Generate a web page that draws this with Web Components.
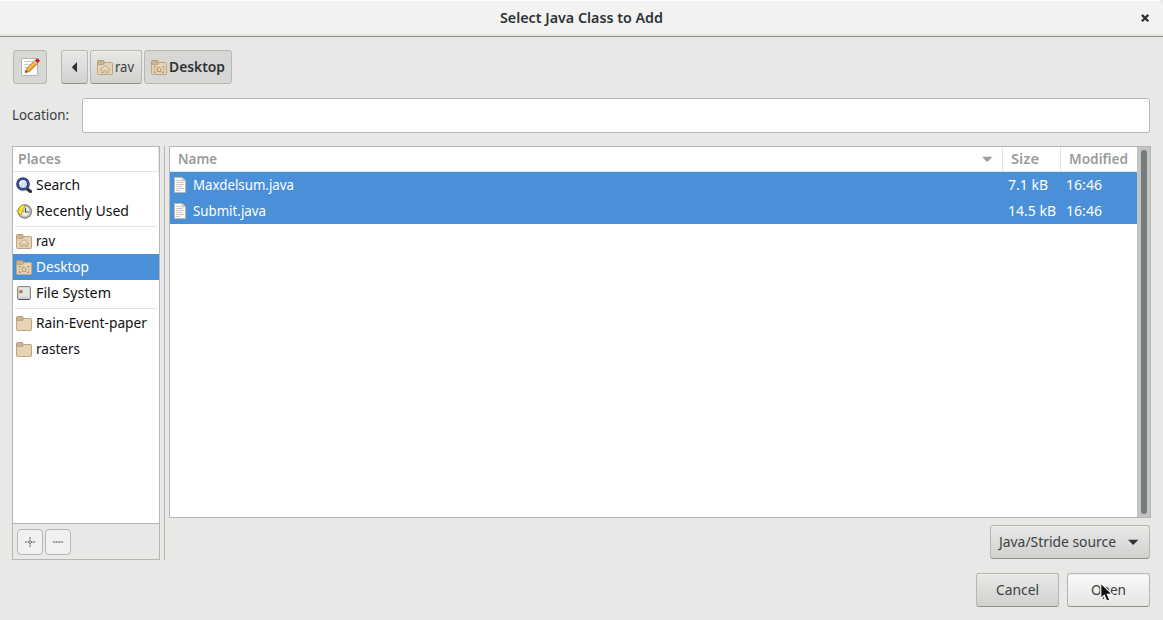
<!DOCTYPE html>
<html lang="en">
<head>
<meta charset="utf-8">
<title>Select Java Class to Add</title>
<style>
html,body{margin:0;height:100%;overflow:hidden;background:#e8e8e6}
body{font:14.6px/20px "Noto Sans","Open Sans",sans-serif;color:#3a4043}
</style>
</head>
<body>
<file-dialog></file-dialog>
<script>
const ICONS = {
  folder: '<path d="M.5 13V2.5q0-1 1-1H6q1 0 1 1V4h8v9z" fill="#cbb590" stroke="#b29c74"/><path d="M.5 14.4V6.2q0-.7.7-.7H6.7l1-2h7q.8 0 .8.8v10.1q0 1.1-.8 1.1H1.4q-.9 0-.9-1.1z" fill="#e6d3b6" stroke="#bda67f"/>',
  doc: '<path d="M2.5.5h8l3 3v12h-11z" fill="#fafaf8" stroke="#b9b9b2"/><path d="M10 .5v3.5h3.5z" fill="#ddddd8" stroke="#b9b9b2" stroke-width=".7"/><path d="M4 3.5h5M4 5.5h7M4 7.5h8M4 9.5h6M4 11.5h8M4 13.5h4" stroke="#c4c4c0" stroke-width=".9"/>',
  search: '<path d="M10.5 11.5l4 3" stroke="#302f33" stroke-width="3.2" stroke-linecap="round"/><circle cx="7" cy="7" r="5.4" fill="#d5e1ed" stroke="#233577" stroke-width="2.9"/><circle cx="7" cy="7" r="5.4" fill="none" stroke="#4059a6" stroke-width="1.2"/><path d="M4 7a3 3 0 0 1 5-2.3" fill="none" stroke="#fff" stroke-width="1.4"/>',
  recent: '<circle cx="8.8" cy="8.5" r="6.6" fill="#d9d9d4" stroke="#77776f" stroke-width="1.2"/><circle cx="8.8" cy="8.5" r="4.9" fill="#eeeeea" stroke="#b6b6b0" stroke-width=".7"/><path d="M9.5 5v4h3.7" fill="none" stroke="#4b4c48" stroke-width="1.1"/><path d="M.6 7.6h2Q2.9 2.6 8.2 1.8L9.1 4.4Q6.5 5.2 6.4 7.6h2L4.5 12z" fill="#f5e13c" stroke="#b89c08" stroke-width=".8"/>',
  disk: '<rect x="1.5" y="1.5" width="13" height="13" rx="1.2" fill="#cfcfcd" stroke="#8b8b89"/><path d="M3 2.6h10v9.2H3z" fill="#e4e4e2"/><path d="M2.3 14.5h11.4" stroke="#555"/><path d="M3.3 5h3.2v3.2H3.3z" fill="#bb7650"/>',
  edit: '<path d="M3.5 2.5h14q1 0 1 1v15q0 1-1 1h-14q-1 0-1-1v-15q0-1 1-1z" fill="#fafafa" stroke="#b2b2ae"/><path d="M5 5.5h9M5 8.5h7M5 11.5h6M5 14.5h4" stroke="#cfcfcc"/><path d="M6.3 16.6l1.7-4.4L15.8 4.6l2.9 2.8-8 8z" fill="#f3a52f" stroke="#a96c1c" stroke-width=".8"/><path d="M8.8 13.2L17 5.4" stroke="#ffd27c" stroke-width="1"/><path d="M16.4 4.3l1.2-1.1q.9-.6 1.9.3t.3 2L18.7 6.7z" fill="#d52027" stroke="#b11"/><path d="M15.3 5l2.9 2.7" stroke="#c9c9c9" stroke-width="1.2"/><path d="M6.3 16.6l.7-2.1 1.4 1.4z" fill="#333"/>',
  back: '<path d="M10 3v10.6L4.8 8.3z" fill="#2e3436"/>',
  down: '<path d="M3 5.8h10.4L8.2 11z" fill="currentColor"/>',
  close: '<path d="M4.9 4.9l6.4 6.4M11.3 4.9l-6.4 6.4" stroke="#2e3436" stroke-width="2.3"/>',
  plus: '<path d="M8 3v10M3 8h10" stroke="#8f9191" stroke-width="1.8" stroke-dasharray="1 .5"/>',
  minus: '<path d="M3 8h10" stroke="#8f9191" stroke-width="1.8" stroke-dasharray="1 .5"/>',
  pointer: '<path d="M.8 .2v15.4l3.4-3.3 2.6 5.9 3.1-1.4-2.6-5.4h5z" fill="#111" stroke="#fff" stroke-width="1.1"/>'
};
ICONS.home = ICONS.folder + '<path d="M3 11L8 6.6 13 11M4.7 10.4v3.1h2.1V11.4h2.4v2.1h2.1v-3.1" fill="#ecdfc9" stroke="#bda47b" stroke-width="1"/>';
ICONS.desk = ICONS.folder + '<path d="M3.3 8.9V7.5H5M11 7.5h1.8v1.4M3.3 12v1.5H5M11 13.5h1.8V12M3.3 10v1M12.8 10v1M6.3 12.6V8.4h2l1.6 1.5v2.7z" fill="none" stroke="#b3986c" stroke-width="1"/>';

function define(name, css, html, ready) {
  const t = document.createElement('template');
  t.innerHTML = `<style>*{box-sizing:border-box}${css}</style>${html}`;
  customElements.define(name, class extends HTMLElement {
    connectedCallback() {
      if (this.shadowRoot) return;
      this.attachShadow({mode: 'open'}).append(t.content.cloneNode(true));
      if (ready) ready(this, this.shadowRoot);
    }
  });
}

define('ui-icon', ':host{display:block;flex:none;width:16px;height:16px}div,svg{display:block;width:100%;height:100%}', '<div></div>', (h, r) => {
  r.querySelector('div').innerHTML = `<svg viewBox="${h.getAttribute('box') || '0 0 16 16'}" fill="none">${ICONS[h.getAttribute('name')]}</svg>`;
});

/* Label condensed or widened to a set advance width */
define('ui-label', ':host{display:block;flex:none;white-space:nowrap;height:20px;line-height:18px}span{display:inline-block;transform-origin:0 50%}', '<span><slot></slot></span>', (h, r) => {
  const w = +h.getAttribute('w'), s = r.querySelector('span');
  h.style.width = w + 'px';
  s.style.transform = `scaleX(${w / s.getBoundingClientRect().width})`;
});

define('ui-button', `:host{display:flex;flex:none;align-items:center;height:34px;box-sizing:border-box;border:1px solid #b6b6b3;border-bottom-color:#91918c;border-radius:3px;background:linear-gradient(#e8e8e7,#d1d1cf);box-shadow:inset 0 1px #f0f0ee}
:host([on]){background:#d7d7d5;border-color:#b6b6b3;box-shadow:none}
:host([hot]){background:linear-gradient(#fafafa,#e4e4e3)}
:host([off]){background:#f1f1f1;border-color:#b6b6b3;height:26px;width:26px;padding:0 4px;border-radius:4px;box-shadow:none}`, '<slot></slot>');

define('title-bar', `:host{display:grid;grid-template-columns:1fr auto 1fr;align-items:center;height:37px;box-sizing:border-box;background:linear-gradient(#fff 1px,#f3f3f2 1px,#f2f2f1 32px,#e4e4e2);border-bottom:1px solid #8f8f88;font-weight:600;color:#2e3436;border-radius:0 6px 0 0}
ui-icon{justify-self:end;margin-right:10px}ui-label{margin-top:-1px}`, '<i></i><ui-label w="163"><slot></slot></ui-label><ui-icon name="close"></ui-icon>');

define('place-row', `:host{display:flex;align-items:center;gap:4px;height:26px;padding-left:3px;color:#111}:host([on]){background:#4a90d9;color:#fff}`, '<slot></slot>');
define('place-gap', ':host{display:block;height:4px;padding:2px 2px 0}div{height:1px;background:#e2e2e2}', '<div></div>');

define('places-pane', `:host{display:flex;flex-direction:column;width:148px;flex:none;box-sizing:border-box;border:1px solid #b6b6b3}
.h{height:25px;border-bottom:1px solid #e4e4e3;border-right:1px solid #e4e4e3;background:#fff;padding:2px 0 0 5px;color:#999c9c;font-weight:600}
.l{flex:1;background:#fff}.f{height:36px;border-top:1px solid #b6b6b3;display:flex;gap:2px;padding:5px 4px}`, `
<div class="h"><ui-label w="43">Places</ui-label></div>
<div class="l">
<place-row><ui-icon name="search"></ui-icon><ui-label w="44">Search</ui-label></place-row>
<place-row><ui-icon name="recent"></ui-icon><ui-label w="93">Recently Used</ui-label></place-row>
<place-gap></place-gap>
<place-row><ui-icon name="home"></ui-icon><ui-label w="19">rav</ui-label></place-row>
<place-row on><ui-icon name="desk"></ui-icon><ui-label w="53">Desktop</ui-label></place-row>
<place-row><ui-icon name="disk"></ui-icon><ui-label w="75">File System</ui-label></place-row>
<place-gap></place-gap>
<place-row><ui-icon name="folder"></ui-icon><ui-label w="111">Rain-Event-paper</ui-label></place-row>
<place-row><ui-icon name="folder"></ui-icon><ui-label w="44">rasters</ui-label></place-row>
</div>
<div class="f"><ui-button off><ui-icon name="plus"></ui-icon></ui-button><ui-button off><ui-icon name="minus"></ui-icon></ui-button></div>`);

define('file-list', `:host{display:flex;height:372px;width:982px;box-sizing:border-box;border:1px solid #b6b6b3;background:#fff}
.t{flex:1}.r{display:grid;grid-template-columns:833px 58px 1fr;height:26px;align-items:center;background:#4a90d9;color:#fff}
.r>*{display:flex;gap:5px;align-items:center}.r .n{padding-left:2px}.r .s{padding-left:5px}
.h{height:25px;background:#fff;color:#999c9c;font-weight:600;border-bottom:1px solid #e4e4e3;align-items:stretch}
.h>div{padding:0 7px 0 8px;border-right:1px solid #e4e4e3;justify-content:space-between}.h>:last-child{border:0}
.bar{width:13px;background:#c3c5c3;padding:3px 3px 3px 4px}.bar div{height:100%;background:#777b7c;border-radius:3px}`, `
<div class="t"><div class="r h"><div><ui-label w="39">Name</ui-label><ui-icon name="down"></ui-icon></div><div><ui-label w="28">Size</ui-label></div><div><ui-label w="59">Modified</ui-label></div></div>
<div class="r"><div class="n"><ui-icon name="doc"></ui-icon><ui-label w="101">Maxdelsum.java</ui-label></div><div class="s"><ui-label w="40">7.1 kB</ui-label></div><div class="s"><ui-label w="36">16:46</ui-label></div></div>
<div class="r"><div class="n"><ui-icon name="doc"></ui-icon><ui-label w="73">Submit.java</ui-label></div><div class="s"><ui-label w="48">14.5 kB</ui-label></div><div class="s"><ui-label w="36">16:46</ui-label></div></div></div>
<div class="bar"><div></div></div>`);

define('file-dialog', `:host{display:block;width:1163px;height:620px;background:#e8e8e6}
.path{display:flex;gap:2px;padding:13px 0 0 13px}.path ui-button{padding:0 6px}.path ui-icon{margin-right:2px}
.loc{display:flex;align-items:center;margin:14px 13px 0 12px;gap:13px}.loc ui-label{margin-bottom:1px}.loc div{flex:1;height:35px;background:#fff;border:1px solid #b6b6b3;border-radius:3px}
.main{display:flex;margin:13px 12px 0;height:414px}.split{width:1px;background:#b6b6b3;margin:0 4px}
.right{display:flex;flex-direction:column;align-items:flex-end;gap:7px}
.act{display:flex;justify-content:flex-end;gap:8px;margin:13px 13px 0;position:relative}
.cur{position:absolute;left:1087px;top:10px;width:16px;height:20px}`, `
<title-bar>Select Java Class to Add</title-bar>
<div class="path">
<ui-button on style="width:34px;margin-right:12px;padding:0 5px"><ui-icon name="edit" box="0 0 22 22" style="width:22px;height:22px"></ui-icon></ui-button>
<ui-button style="width:27px;padding:0 5px"><ui-icon name="back"></ui-icon></ui-button>
<ui-button style="width:52px"><ui-icon name="home"></ui-icon><ui-label w="19">rav</ui-label></ui-button>
<ui-button on style="width:88px"><ui-icon name="desk"></ui-icon><ui-label w="56" style="font-weight:600;color:#2e3436">Desktop</ui-label></ui-button>
</div>
<div class="loc"><ui-label w="57">Location:</ui-label><div></div></div>
<div class="main"><places-pane></places-pane><div class="split"></div>
<div class="right"><file-list></file-list><ui-button style="width:160px;padding-left:8px;gap:9px;margin-right:1px"><ui-label w="117">Java/Stride source</ui-label><ui-icon name="down" style="color:#2e3436"></ui-icon></ui-button></div></div>
<div class="act"><ui-button style="width:83px;padding-left:19px"><ui-label w="43">Cancel</ui-label></ui-button><ui-button hot style="width:83px;padding-left:23px"><ui-label w="35">Open</ui-label></ui-button><ui-icon class="cur" name="pointer" box="0 0 16 20"></ui-icon></div>`);
</script>
</body>
</html>
